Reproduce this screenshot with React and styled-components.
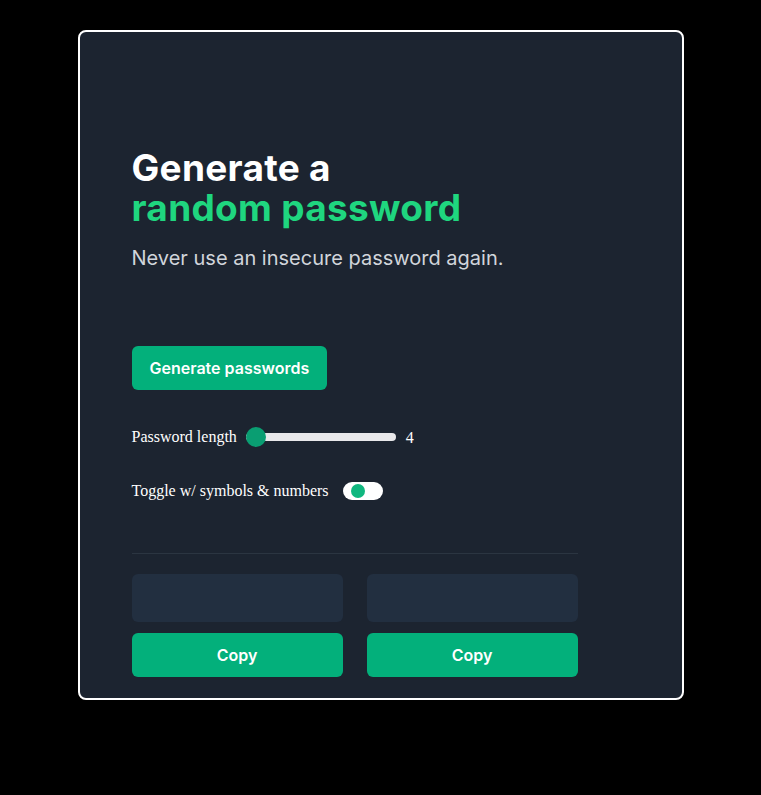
import React, { useState } from "react";
import styled, { createGlobalStyle } from "styled-components";

const Global = createGlobalStyle`
  html, body { margin: 0; padding: 0; background: #000; }
  body { font-family: "Times New Roman", "Liberation Serif", serif; }
`;

const Page = styled.div`
  display: flex;
  justify-content: center;
  align-items: flex-start;
  padding-top: 30px;
  min-height: 795px;
  box-sizing: border-box;
`;

const Card = styled.main`
  width: 606px;
  box-sizing: border-box;
  background: #1c2430;
  border: 2px solid #ffffff;
  border-radius: 8px;
  padding: 116px 104px 21px 52px;
`;

const Title = styled.h1`
  margin: 0;
  font-family: Inter, "Liberation Sans", sans-serif;
  font-weight: 700;
  font-size: 37px;
  line-height: 40px;
  color: #ffffff;
  letter-spacing: 0.3px;
`;

const Accent = styled.span`
  display: block;
  color: #1fd67f;
`;

const Subtitle = styled.p`
  margin: 16px 0 0;
  font-family: Inter, "Liberation Sans", sans-serif;
  font-size: 20px;
  line-height: 28px;
  color: #d1d5db;
`;

const PrimaryButton = styled.button`
  display: block;
  border: none;
  cursor: pointer;
  background: #03b07b;
  color: #ffffff;
  font-family: Inter, "Liberation Sans", sans-serif;
  font-weight: 600;
  font-size: 16px;
  height: 44px;
  border-radius: 6px;
  padding: 0 18px;
  width: ${(p) => (p.$full ? "100%" : "auto")};
  margin-top: ${(p) => p.$mt || 0}px;
`;

const Row = styled.div`
  display: flex;
  align-items: center;
  margin-top: ${(p) => p.$mt}px;
  color: #ffffff;
  font-size: 16px;
  height: ${(p) => p.$h}px;
`;

const Label = styled.span`
  font-family: "Times New Roman", "Liberation Serif", serif;
  font-size: 16px;
  color: #ffffff;
`;

const Range = styled.input`
  -webkit-appearance: none;
  appearance: none;
  width: 150px;
  height: 20px;
  margin: 0 0 0 9px;
  background: transparent;
  &::-webkit-slider-runnable-track {
    height: 8px;
    border-radius: 4px;
    background: #e8e8ea;
  }
  &::-webkit-slider-thumb {
    -webkit-appearance: none;
    width: 20px;
    height: 20px;
    border-radius: 50%;
    background: #0a9e72;
    margin-top: -6px;
    border: none;
  }
`;

const Value = styled.span`
  margin-left: 10px;
  font-family: "Times New Roman", "Liberation Serif", serif;
  font-size: 16px;
  padding-top: 2px;
`;

const Switch = styled.button`
  position: relative;
  width: 40px;
  height: 18px;
  margin-left: 14px;
  border: none;
  padding: 0;
  border-radius: 9px;
  background: #ffffff;
  cursor: pointer;
`;

const Knob = styled.span`
  position: absolute;
  top: 2px;
  left: ${(p) => (p.$on ? 18 : 8)}px;
  width: 14px;
  height: 14px;
  border-radius: 50%;
  background: #10b77f;
`;

const Divider = styled.hr`
  margin: 53px 0 0;
  border: none;
  border-top: 1px solid #2b3541;
`;

const Grid = styled.div`
  display: grid;
  grid-template-columns: 1fr 1fr;
  column-gap: 24px;
  margin-top: 20px;
`;

const Column = styled.div`
  display: flex;
  flex-direction: column;
  gap: 11px;
`;

const Output = styled.div`
  height: 48px;
  border-radius: 6px;
  background: #222f40;
  color: #fff;
  font-family: Inter, "Liberation Sans", sans-serif;
  display: flex;
  align-items: center;
  justify-content: center;
`;

export default function App() {
  const [len, setLen] = useState(4);
  const [on, setOn] = useState(false);
  return (
    <>
      <Global />
      <Page>
        <Card>
          <Title>
            Generate a<Accent>random password</Accent>
          </Title>
          <Subtitle>Never use an insecure password again.</Subtitle>
          <PrimaryButton $mt={74}>Generate passwords</PrimaryButton>
          <Row $mt={37} $h={20}>
            <Label>Password length</Label>
            <Range
              type="range"
              min={4}
              max={20}
              value={len}
              onChange={(e) => setLen(Number(e.target.value))}
            />
            <Value>{len}</Value>
          </Row>
          <Row $mt={35} $h={18}>
            <Label>Toggle w/ symbols &amp; numbers</Label>
            <Switch onClick={() => setOn(!on)} aria-label="toggle">
              <Knob $on={on} />
            </Switch>
          </Row>
          <Divider />
          <Grid>
            <Column>
              <Output />
              <PrimaryButton $full>Copy</PrimaryButton>
            </Column>
            <Column>
              <Output />
              <PrimaryButton $full>Copy</PrimaryButton>
            </Column>
          </Grid>
        </Card>
      </Page>
    </>
  );
}
